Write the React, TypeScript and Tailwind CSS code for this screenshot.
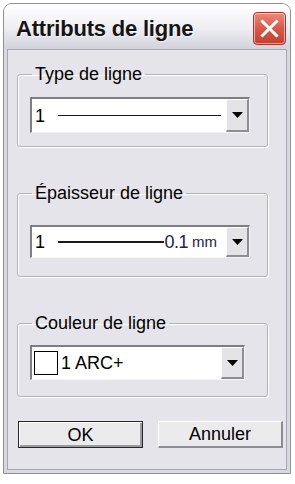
export default function App() {
  return (
    <div className="w-[295px] h-[484px] bg-white pt-[3px] pl-[3px] font-['Liberation_Sans',Arial,sans-serif] text-black">
      {/* window */}
      <div className="w-[288px] h-[471px] rounded-t-[9px] border border-[#8e8f9d] bg-[#d8d8e1] flex flex-col overflow-hidden">
        {/* title bar */}
        <div className="h-[45px] shrink-0 bg-gradient-to-b from-[#ffffff] via-[#f0f0f4] to-[#d2d2dc] flex items-center justify-between pl-[12px] pr-[4px] pt-[4px]">
          <span className="text-[22px] font-bold leading-none tracking-[-0.2px] text-[#151515] [text-shadow:1px_1px_0_rgba(255,255,255,0.6)]">
            Attributs de ligne
          </span>
          <CloseButton />
        </div>

        {/* client area */}
        <div className="flex-1 mx-[3px] mb-[3px] border border-[#a6a6b2] bg-[#e5e4ea] flex flex-col text-[18px] leading-[20px]">
          <GroupBox title="Type de ligne" className="mt-[14px]" comboClass="mt-[13px] mb-[13px] h-[36px] w-[220px]">
            <span className="pl-[3px]">1</span>
            <span className="flex-1 ml-[13px] mr-[5px] h-[1.5px] bg-[#1a1a1a]" />
          </GroupBox>

          <GroupBox title="Épaisseur de ligne" className="mt-[36px]" comboClass="mt-[22px] mb-[18px] h-[33px] w-[220px]">
            <span className="pl-[3px]">1</span>
            <span className="flex-1 ml-[13px] h-[1.5px] bg-[#1a1a1a]" />
            <span className="text-[#23234a] tracking-[-0.5px]">0.1</span>
            <span className="ml-[4px] mr-[9px] text-[15px] text-[#23234a]">mm</span>
          </GroupBox>

          <GroupBox title="Couleur de ligne" className="mt-[36px]" comboClass="mt-[12px] mb-[16px] h-[35px] w-[215px]">
            <span className="ml-[2px] w-[24px] h-[24px] border border-black bg-white shrink-0" />
            <span className="ml-[3px] flex-1">1 ARC+</span>
          </GroupBox>

          <div className="flex mt-[24px] ml-[10px] gap-[15px]">
            <button className="w-[125px] h-[27px] border border-[#262626] bg-[#ebebee] flex items-center justify-center shadow-[inset_1px_1px_0_#ffffff,inset_-2px_-2px_0_#9a9aa2]">
              OK
            </button>
            <button className="w-[125px] h-[27px] bg-[#ebebee] flex items-center justify-center border-t border-l border-t-white border-l-white border-b-2 border-r-2 border-b-[#8c8c94] border-r-[#8c8c94]">
              Annuler
            </button>
          </div>
        </div>
      </div>
    </div>
  )
}

function CloseButton() {
  return (
    <div className="w-[33px] h-[33px] rounded-[4px] border border-[#9a3a30] bg-gradient-to-b from-[#ec8a7c] via-[#d9584a] to-[#c2402f] flex items-center justify-center shadow-[inset_0_0_0_1px_rgba(255,255,255,0.55)]">
      <svg width="19" height="19" viewBox="0 0 19 19">
        <path d="M2.5 2.5 L16.5 16.5 M16.5 2.5 L2.5 16.5" stroke="#ffffff" strokeWidth="3" strokeLinecap="square" />
      </svg>
    </div>
  )
}

function GroupBox({
  title,
  className,
  comboClass,
  children,
}: {
  title: string
  className: string
  comboClass: string
  children: React.ReactNode
}) {
  return (
    <fieldset
      className={`ml-[9px] w-[251px] rounded-[3px] border border-[#b3b3bb] shadow-[inset_1px_1px_0_#ffffff,1px_1px_0_#ffffff] ${className}`}
    >
      <legend className="ml-[14px] px-[3px] leading-[20px]">{title}</legend>
      <div
        className={`ml-[12px] flex items-center bg-white border-t-2 border-l-2 border-t-[#7d7d82] border-l-[#7d7d82] border-b border-r border-b-[#f5f5f5] border-r-[#f5f5f5] ${comboClass}`}
      >
        {children}
        <DropButton />
      </div>
    </fieldset>
  )
}

function DropButton() {
  return (
    <div className="w-[23px] h-full shrink-0 bg-[#e4e4e8] flex items-center justify-center border-t border-l border-t-[#fbfbfb] border-l-[#fbfbfb] border-b-2 border-r-2 border-b-[#8d8d93] border-r-[#8d8d93]">
      <svg width="11" height="6" viewBox="0 0 11 6">
        <path d="M0 0 H11 L5.5 6 Z" fill="#000000" />
      </svg>
    </div>
  )
}
